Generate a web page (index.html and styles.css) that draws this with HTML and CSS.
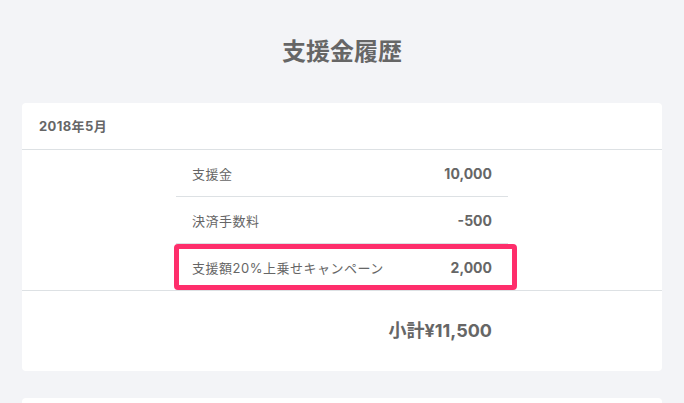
FILE: index.html
```html
<!DOCTYPE html>
<html lang="ja">
<head>
    <meta charset="UTF-8">
    <meta name="viewport" content="width=device-width, initial-scale=1.0">
    <title>支援金履歴</title>
    <link rel="stylesheet" href="styles.css">
</head>
<body>
    <h1 class="page-title">支援金履歴</h1>

    <div class="card">
        <div class="card-head">2018年5月</div>
        <div class="items">
            <div class="item">
                <span class="item-name">支援金</span>
                <span class="item-value">10,000</span>
            </div>
            <div class="item">
                <span class="item-name">決済手数料</span>
                <span class="item-value">-500</span>
            </div>
            <div class="item item-marked">
                <span class="item-name">支援額20%上乗せキャンペーン</span>
                <span class="item-value">2,000</span>
            </div>
        </div>
        <div class="card-foot">
            <div class="subtotal">小計¥11,500</div>
        </div>
    </div>

    <div class="card card-next"></div>
</body>
</html>
```

FILE: styles.css
```css
body {
    margin: 0;
    background-color: #f3f4f7;
    color: #666;
    font-family: Inter, "Noto Sans CJK JP", sans-serif;
}
.page-title {
    margin: 0;
    padding: 35px 0 0;
    height: 68px;
    font-size: 24px;
    line-height: 34px;
    font-weight: bold;
    text-align: center;
    color: #666;
}
.card {
    background-color: #fff;
    margin: 0 22px;
    border-radius: 4px;
}
.card-head {
    height: 46px;
    line-height: 46px;
    padding: 0 17px;
    font-size: 13px;
    font-weight: bold;
    letter-spacing: 0.4px;
    border-bottom: 1px solid #dde1e4;
}
.items {
    width: 332px;
    margin: 0 auto;
}
.item {
    display: flex;
    justify-content: space-between;
    align-items: center;
    height: 46px;
    padding: 0 16px;
    font-size: 13px;
    border-bottom: 1px solid #dde1e4;
}
.item:last-child {
    border-bottom: none;
}
.item-name {
    letter-spacing: 0.5px;
}
.item-value {
    font-size: 14px;
    font-weight: bold;
}
.item-marked {
    position: relative;
}
.item-marked::after {
    content: "";
    position: absolute;
    left: -2px;
    right: -9px;
    top: 0;
    bottom: 0;
    border: 5px solid #fe2e6b;
    border-radius: 4px;
}
.card-foot {
    border-top: 1px solid #dde1e4;
    height: 80px;
}
.subtotal {
    width: 332px;
    margin: 0 auto;
    box-sizing: border-box;
    padding: 0 16px;
    text-align: right;
    font-size: 18px;
    font-weight: bold;
    line-height: 80px;
}
.card-next {
    margin-top: 27px;
    height: 40px;
}
```
